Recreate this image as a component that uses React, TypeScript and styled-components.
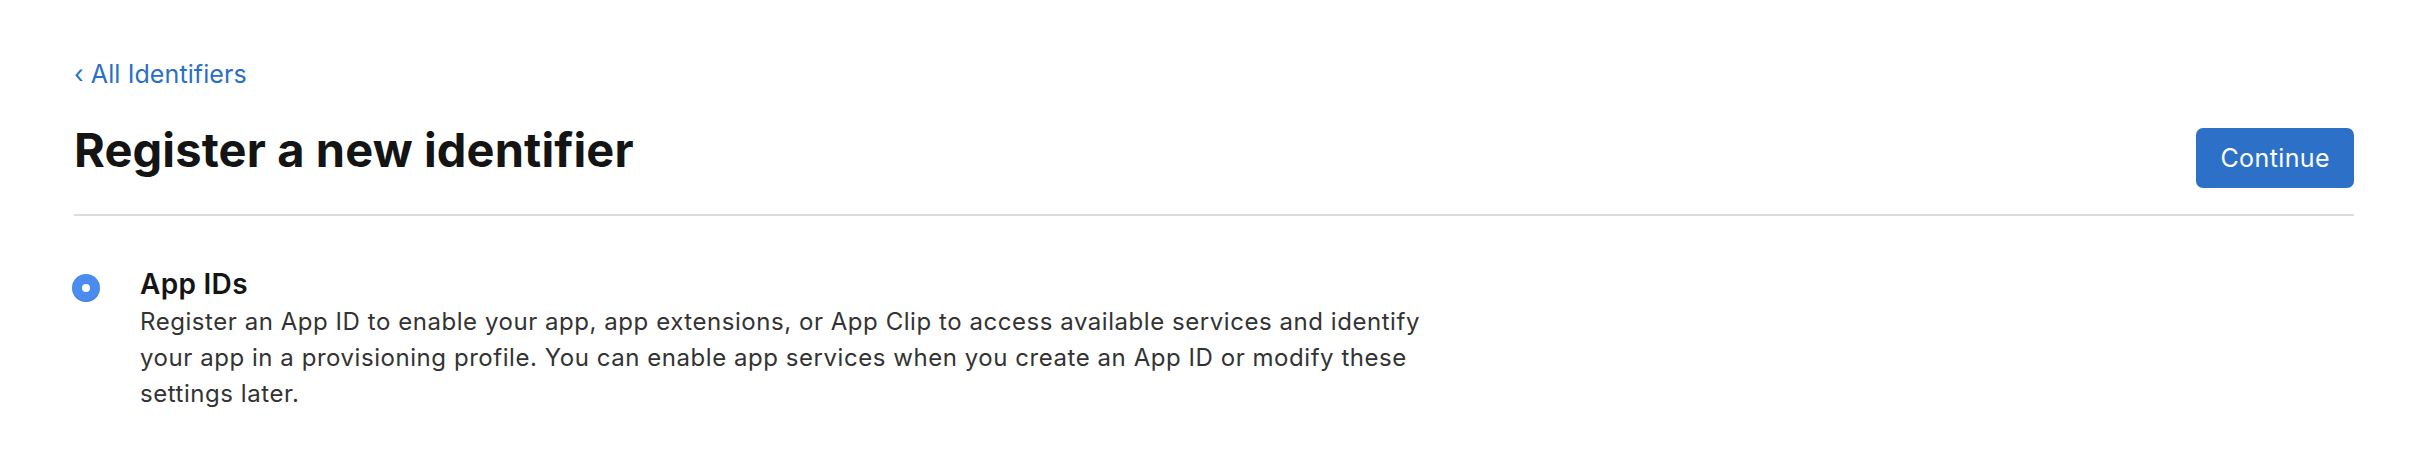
import React, { useState } from 'react';
import styled, { createGlobalStyle } from 'styled-components';

const GlobalStyle = createGlobalStyle`
  html, body {
    margin: 0;
    padding: 0;
    background: #fff;
  }
  body {
    font-family: Inter, "Noto Sans", "Liberation Sans", sans-serif;
    -webkit-font-smoothing: antialiased;
  }
`;

const Page = styled.div`
  padding: 59px 62px 0 74px;
  box-sizing: border-box;
  width: 100%;
`;

const BackLink = styled.a`
  display: block;
  font-size: 25px;
  line-height: 30px;
  letter-spacing: 0.1px;
  color: #2a6fc6;
  text-decoration: none;
  cursor: pointer;

  &:hover {
    text-decoration: underline;
  }
`;

const Header = styled.div`
  display: flex;
  justify-content: space-between;
  align-items: flex-start;
  margin-top: 33px;
  padding-bottom: 26px;
  border-bottom: 2px solid #dcdcdc;
`;

const Heading = styled.h1`
  margin: 0;
  font-size: 47px;
  line-height: 56px;
  font-weight: 700;
  letter-spacing: 0.12px;
  color: #141414;
`;

const Button = styled.button`
  margin-top: 6px;
  height: 60px;
  padding: 0 24px;
  background: #2c71c7;
  color: #fff;
  border: none;
  border-radius: 7px;
  font-family: inherit;
  font-size: 25px;
  letter-spacing: 0.4px;
  cursor: pointer;

  &:hover {
    background: #2565b5;
  }
`;

const Option = styled.label`
  display: flex;
  align-items: flex-start;
  gap: 40px;
  margin-top: 51px;
  margin-left: -2px;
  cursor: pointer;
`;

const Radio = styled.span<{ $checked: boolean }>`
  flex: none;
  margin-top: 7px;
  width: 28px;
  height: 28px;
  border-radius: 50%;
  box-sizing: border-box;
  display: flex;
  align-items: center;
  justify-content: center;
  background: ${(p) => (p.$checked ? '#4a8cf0' : '#fff')};
  border: ${(p) => (p.$checked ? 'none' : '2px solid #bbb')};
  box-shadow: inset 0 -1px 1px rgba(0, 0, 0, 0.12);

  &::after {
    content: '';
    width: 8px;
    height: 8px;
    border-radius: 50%;
    background: #fff;
    display: ${(p) => (p.$checked ? 'block' : 'none')};
  }
`;

const OptionText = styled.div`
  display: flex;
  flex-direction: column;
`;

const OptionTitle = styled.div`
  font-size: 28px;
  line-height: 34px;
  font-weight: 600;
  letter-spacing: 0.3px;
  color: #151515;
`;

const OptionDescription = styled.p`
  margin: 3px 0 0;
  width: 1320px;
  font-size: 24px;
  line-height: 36px;
  letter-spacing: 0.55px;
  color: #333;
`;

export default function App() {
  const [selected, setSelected] = useState(true);

  return (
    <>
      <GlobalStyle />
      <Page>
        <BackLink>‹ All Identifiers</BackLink>
        <Header>
          <Heading>Register a new identifier</Heading>
          <Button type="button">Continue</Button>
        </Header>
        <Option onClick={() => setSelected(true)}>
          <Radio $checked={selected} />
          <OptionText>
            <OptionTitle>App IDs</OptionTitle>
            <OptionDescription>
              Register an App ID to enable your app, app extensions, or App Clip to access
              available services and identify your app in a provisioning profile. You can
              enable app services when you create an App ID or modify these settings later.
            </OptionDescription>
          </OptionText>
        </Option>
      </Page>
    </>
  );
}
